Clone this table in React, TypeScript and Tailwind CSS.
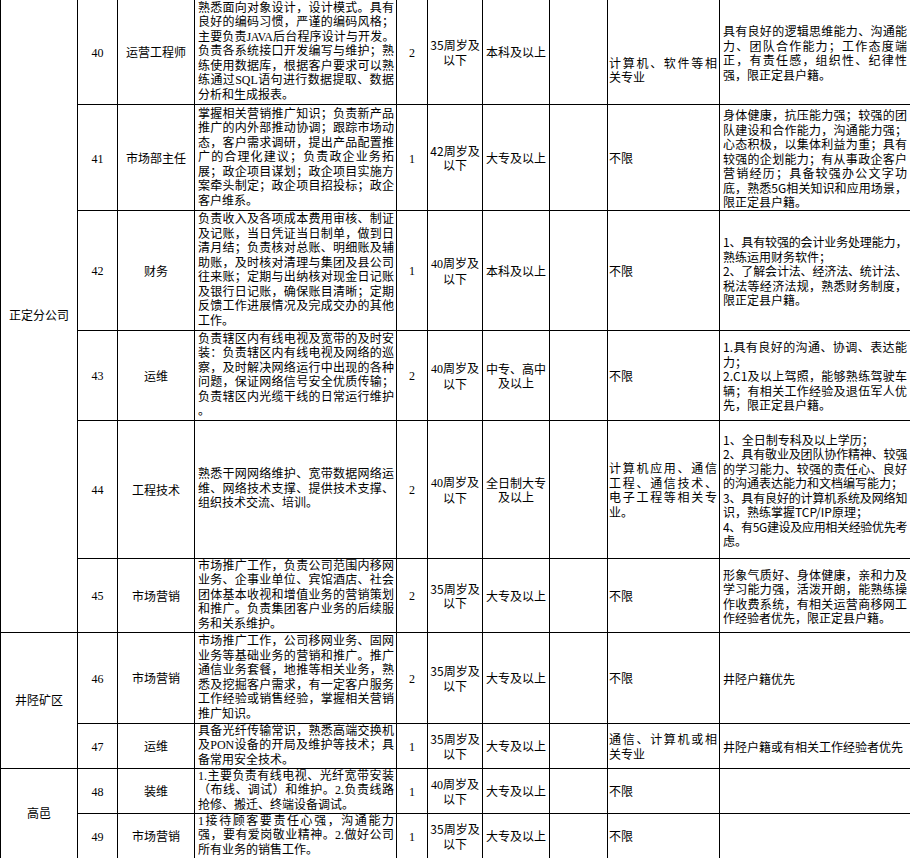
import React from "react";

type Row = {
  no: string;
  pos: string;
  duty: string[];
  cnt: string;
  age: string;
  ageSerif?: boolean;
  edu: string[];
  major: string[];
  majorTop?: boolean;
  req: string[][];
  h: string;
};

const rows: Row[] = [
  {
    no: "40",
    pos: "运营工程师",
    duty: [
      "熟悉面向对象设计，设计模式。具有",
      "良好的编码习惯，严谨的编码风格；",
      "~主要负责JAVA后台程序设计与开发。",
      "负责各系统接口开发编写与维护；熟",
      "练使用数据库，根据客户要求可以熟",
      "练通过SQL语句进行数据提取、数据",
      "分析和生成报表。",
    ],
    cnt: "2",
    age: "35",
    edu: ["本科及以上"],
    major: ["计算机、软件等相", "关专业"],
    majorTop: true,
    req: [["具有良好的逻辑思维能力、沟通能", "力、团队合作能力；工作态度端", "正，有责任感，组织性、纪律性", "强，限正定县户籍。"]],
    h: "h-[106px]",
  },
  {
    no: "41",
    pos: "市场部主任",
    duty: [
      "掌握相关营销推广知识；负责新产品",
      "推广的内外部推动协调；跟踪市场动",
      "态，客户需求调研，提出产品配置推",
      "广的合理化建议；负责政企业务拓",
      "展；政企项目谋划；政企项目实施方",
      "案牵头制定；政企项目招投标；政企",
      "客户维系。",
    ],
    cnt: "1",
    age: "42",
    edu: ["大专及以上"],
    major: ["不限"],
    req: [[
      "身体健康，抗压能力强；较强的团",
      "队建设和合作能力，沟通能力强；",
      "心态积极，以集体利益为重；具有",
      "较强的企划能力；有从事政企客户",
      "营销经历；具备较强办公文字功",
      "底，熟悉5G相关知识和应用场景，",
      "限正定县户籍。",
    ]],
    h: "h-[105px]",
  },
  {
    no: "42",
    pos: "财务",
    duty: [
      "负责收入及各项成本费用审核、制证",
      "及记账，当日凭证当日制单，做到日",
      "清月结；负责核对总账、明细账及辅",
      "助账，及时核对清理与集团及县公司",
      "往来账；定期与出纳核对现金日记账",
      "及银行日记账，确保账目清晰；定期",
      "反馈工作进展情况及完成交办的其他",
      "工作。",
    ],
    cnt: "1",
    age: "40",
    ageSerif: true,
    edu: ["本科及以上"],
    major: ["不限"],
    req: [
      ["~1、具有较强的会计业务处理能力，", "熟练运用财务软件；"],
      ["~2、了解会计法、经济法、统计法、", "税法等经济法规，熟悉财务制度，", "限正定县户籍。"],
    ],
    h: "h-[120px]",
  },
  {
    no: "43",
    pos: "运维",
    duty: [
      "负责辖区内有线电视及宽带的及时安",
      "装：负责辖区内有线电视及网络的巡",
      "察，及时解决网络运行中出现的各种",
      "问题，保证网络信号安全优质传输；",
      "负责辖区内光缆干线的日常运行维护",
      "。",
    ],
    cnt: "2",
    age: "40",
    ageSerif: true,
    edu: ["中专、高中", "及以上"],
    major: ["不限"],
    req: [
      ["1.具有良好的沟通、协调、表达能", "力；"],
      ["2.C1及以上驾照，能够熟练驾驶车", "辆；有相关工作经验及退伍军人优", "先，限正定县户籍。"],
    ],
    h: "h-[90px]",
  },
  {
    no: "44",
    pos: "工程技术",
    duty: [
      "熟悉干网网络维护、宽带数据网络运",
      "维、网络技术支撑、提供技术支撑、",
      "组织技术交流、培训。",
    ],
    cnt: "2",
    age: "40",
    ageSerif: true,
    edu: ["全日制大专", "及以上"],
    major: ["计算机应用、通信", "工程、通信技术、", "电子工程等相关专", "业。"],
    req: [
      ["1、全日制专科及以上学历；"],
      ["~2、具有敬业及团队协作精神、较强", "的学习能力、较强的责任心、良好", "的沟通表达能力和文档编写能力；"],
      ["~3、具有良好的计算机系统及网络知", "识，熟练掌握TCP/IP原理；"],
      ["~4、有5G建设及应用相关经验优先考", "虑。"],
    ],
    h: "h-[138px]",
  },
  {
    no: "45",
    pos: "市场营销",
    duty: [
      "市场推广工作，负责公司范围内移网",
      "业务、企事业单位、宾馆酒店、社会",
      "团体基本收视和增值业务的营销策划",
      "和推广。负责集团客户业务的后续服",
      "务和关系维护。",
    ],
    cnt: "2",
    age: "35",
    edu: ["大专及以上"],
    major: ["不限"],
    req: [["形象气质好、身体健康，亲和力及", "学习能力强，活泼开朗，能熟练操", "作收费系统，有相关运营商移网工", "作经验者优先，限正定县户籍。"]],
    h: "h-[74px]",
  },
  {
    no: "46",
    pos: "市场营销",
    duty: [
      "市场推广工作，公司移网业务、固网",
      "业务等基础业务的营销和推广。推广",
      "通信业务套餐，地推等相关业务，熟",
      "悉及挖掘客户需求，有一定客户服务",
      "工作经验或销售经验，掌握相关营销",
      "推广知识。",
    ],
    cnt: "2",
    age: "35",
    edu: ["大专及以上"],
    major: ["不限"],
    req: [["井陉户籍优先"]],
    h: "h-[91px]",
  },
  {
    no: "47",
    pos: "运维",
    duty: ["具备光纤传输常识，熟悉高端交换机", "及PON设备的开局及维护等技术；具", "备常用安全技术。"],
    cnt: "1",
    age: "35",
    edu: ["大专及以上"],
    major: ["通信、计算机或相", "关专业"],
    req: [["井陉户籍或有相关工作经验者优先"]],
    h: "h-[45px]",
  },
  {
    no: "48",
    pos: "装维",
    duty: ["1.主要负责有线电视、光纤宽带安装", "（布线、调试）和维护。2.负责线路", "抢修、搬迁、终端设备调试。"],
    cnt: "1",
    age: "40",
    ageSerif: true,
    edu: ["大专及以上"],
    major: ["不限"],
    req: [],
    h: "h-[45px]",
  },
  {
    no: "49",
    pos: "市场营销",
    duty: ["1接待顾客要责任心强，沟通能力", "强，要有爱岗敬业精神。2.做好公司", "所有业务的销售工作。"],
    cnt: "1",
    age: "35",
    edu: ["大专及以上"],
    major: ["不限"],
    req: [],
    h: "h-[45px]",
  },
];

const groups: Record<number, { name: string; span: number }> = {
  0: { name: "正定分公司", span: 6 },
  6: { name: "井陉矿区", span: 2 },
  8: { name: "高邑", span: 2 },
};

function Lines({ lines }: { lines: string[] }) {
  return (
    <>
      {lines.map((raw, i) => {
        const tight = raw.startsWith("~");
        const l = tight ? raw.slice(1) : raw;
        const base = tight ? "whitespace-nowrap tracking-[-0.4px]" : "whitespace-nowrap";
        return (
          <div
            key={i}
            className={
              i < lines.length - 1
                ? `${base} text-justify [text-align-last:justify] [text-justify:inter-character]`
                : `${base} text-left`
            }
          >
            {l}
          </div>
        );
      })}
    </>
  );
}

const td = "border border-black p-0 align-middle";

export default function App() {
  return (
    <div className="w-[910px] h-[858px] overflow-hidden bg-white">
      <table className="mt-[-2px] table-fixed border-collapse w-[912px] text-[12px] leading-[14.5px] text-black [font-family:'Noto_Sans_CJK_SC',sans-serif]">
        <colgroup>
          <col className="w-[77px]" />
          <col className="w-[40px]" />
          <col className="w-[77px]" />
          <col className="w-[202px]" />
          <col className="w-[31px]" />
          <col className="w-[55px]" />
          <col className="w-[67px]" />
          <col className="w-[58px]" />
          <col className="w-[112px]" />
          <col className="w-[193px]" />
        </colgroup>
        <tbody>
          {rows.map((r, idx) => (
            <tr key={r.no} className={r.h}>
              {groups[idx] && (
                <td rowSpan={groups[idx].span} className={`${td} text-center`}>
                  {groups[idx].name}
                </td>
              )}
              <td className={`${td} text-center pt-[3px] [font-family:'Liberation_Serif',serif]`}>{r.no}</td>
              <td className={`${td} text-center pt-[2px]`}>{r.pos}</td>
              <td className={`${td} pl-[3px] pr-[2px] [font-family:'Liberation_Serif','Noto_Sans_CJK_SC',serif]`}>
                <Lines lines={r.duty} />
              </td>
              <td className={`${td} text-center pt-[3px] [font-family:'Liberation_Serif',serif]`}>{r.cnt}</td>
              <td className={`${td} text-center pt-[2px]`}>
                <div>
                  <span className={r.ageSerif ? "[font-family:'Liberation_Serif',serif]" : ""}>{r.age}</span>周岁及
                </div>
                <div>以下</div>
              </td>
              <td className={`${td} text-center pt-[2px]`}>
                {r.edu.map((e, i) => (
                  <div key={i}>{e}</div>
                ))}
              </td>
              <td className={td}></td>
              <td className={`${td} pl-[1px] pr-[2px] ${r.majorTop ? "pt-[37px]" : "pt-[2px]"}`}>
                <Lines lines={r.major} />
              </td>
              <td className={`${td} pl-[3px] pr-[5px] pt-[3px]`}>
                {r.req.map((p, i) => (
                  <Lines key={i} lines={p} />
                ))}
              </td>
            </tr>
          ))}
        </tbody>
      </table>
    </div>
  );
}
